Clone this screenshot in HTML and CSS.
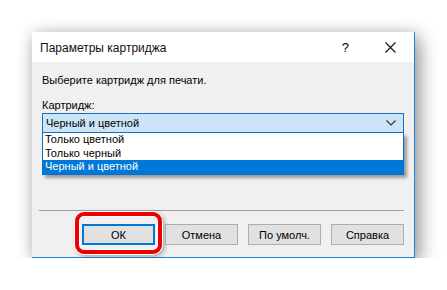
FILE: index.html
```html
<!DOCTYPE html>
<html>
<head>
<meta charset="utf-8">
<link rel="stylesheet" href="styles.css">
</head>
<body>
<div class="dialog">
  <div class="titlebar">
    <span class="title">Параметры картриджа</span>
    <span class="help">?</span>
    <svg class="close" width="11" height="11" viewBox="0 0 11 11"><path d="M0.5 0.5 L10.5 10.5 M10.5 0.5 L0.5 10.5" stroke="#111" stroke-width="1.1" fill="none"/></svg>
  </div>
  <div class="content">
    <div class="prompt">Выберите картридж для печати.</div>
    <div class="label">Картридж:</div>
    <div class="combo-wrap">
      <div class="combo">
        <span>Черный и цветной</span>
        <svg class="chev" width="10" height="6" viewBox="0 0 10 6"><path d="M0.5 0.5 L5 5 L9.5 0.5" stroke="#333" stroke-width="1.1" fill="none"/></svg>
      </div>
      <ul class="list">
        <li>Только цветной</li>
        <li>Только черный</li>
        <li class="sel">Черный и цветной</li>
      </ul>
    </div>
    <div class="sep"></div>
    <div class="buttons">
      <div class="hl"><button class="btn ok">ОК</button></div>
      <button class="btn">Отмена</button>
      <button class="btn">По умолч.</button>
      <button class="btn">Справка</button>
    </div>
  </div>
</div>
</body>
</html>
```

FILE: styles.css
```css
html, body {
  margin: 0;
  padding: 0;
  background: #ffffff;
}
body {
  padding: 32px 0 0 32px;
  font-family: "Liberation Sans", Arial, sans-serif;
  font-size: 11px;
  color: #000;
}
.dialog {
  width: 382px;
  height: 225px;
  border-right: 1px solid #1a84d8;
  border-bottom: 1px solid #1a84d8;
  background: #f0f0f0;
  box-shadow: 5px 6px 18px rgba(0,0,0,0.38), 0 0 14px rgba(0,0,0,0.12);
  display: flex;
  flex-direction: column;
}
.titlebar {
  height: 30px;
  background: #fff;
  display: flex;
  align-items: center;
  padding-left: 8px;
  padding-right: 18px;
}
.title {
  flex: 1;
  font-size: 12px;
  color: #1a0a1a;
  padding-top: 1px;
}
.help {
  font-size: 13px;
  margin-right: 36px;
  padding-top: 1px;
}
.close {
  display: block;
}
.content {
  flex: 1;
  padding: 11px 10px 0 10px;
  display: flex;
  flex-direction: column;
}
.prompt {
  height: 14px;
  line-height: 14px;
}
.label {
  margin-top: 11px;
  height: 14px;
  line-height: 14px;
}
.combo-wrap {
  position: relative;
  margin-top: 1px;
  width: 362px;
}
.combo {
  height: 18px;
  border: 1px solid #1a6fb8;
  background: #cce4f7;
  display: flex;
  align-items: center;
  padding: 0 7px 0 3px;
}
.combo span { flex: 1; }
.chev { display: block; }
.list {
  position: absolute;
  left: 0;
  top: 20px;
  width: 360px;
  margin: 0;
  padding: 0;
  list-style: none;
  background: #fff;
  border: 1px solid #0f6fc6;
  border-top: none;
  box-shadow: 3px 3px 3px rgba(0,0,0,0.35);
  z-index: 2;
}
.list li {
  height: 13.5px;
  line-height: 13px;
  padding-left: 2px;
}
.list li.sel {
  background: #0078d7;
  color: #fff;
}
.sep {
  margin-top: 77px;
  margin-left: -3px;
  height: 1px;
  width: 365px;
  background: #a0a0a0;
}
.buttons {
  margin-top: 13px;
  display: flex;
  align-items: flex-start;
  padding-left: 40px;
  gap: 10px;
}
.btn {
  width: 73px;
  height: 21px;
  border: 1px solid #adadad;
  background: #e1e1e1;
  font-family: inherit;
  font-size: 11px;
  color: #000;
  padding: 0;
  margin: 0;
}
.btn.ok {
  border: 2px solid #0078d7;
}
.hl {
  padding: 8px 3px 5px 3px;
  margin: -12px -7px -9px -7px;
  border: 4px solid #ee0000;
  border-radius: 9px;
  box-shadow: inset 0 0 0 1px #fff, 0 0 0 1px #fff, 2px 2px 5px rgba(0,0,0,0.4);
  display: flex;
}
```
